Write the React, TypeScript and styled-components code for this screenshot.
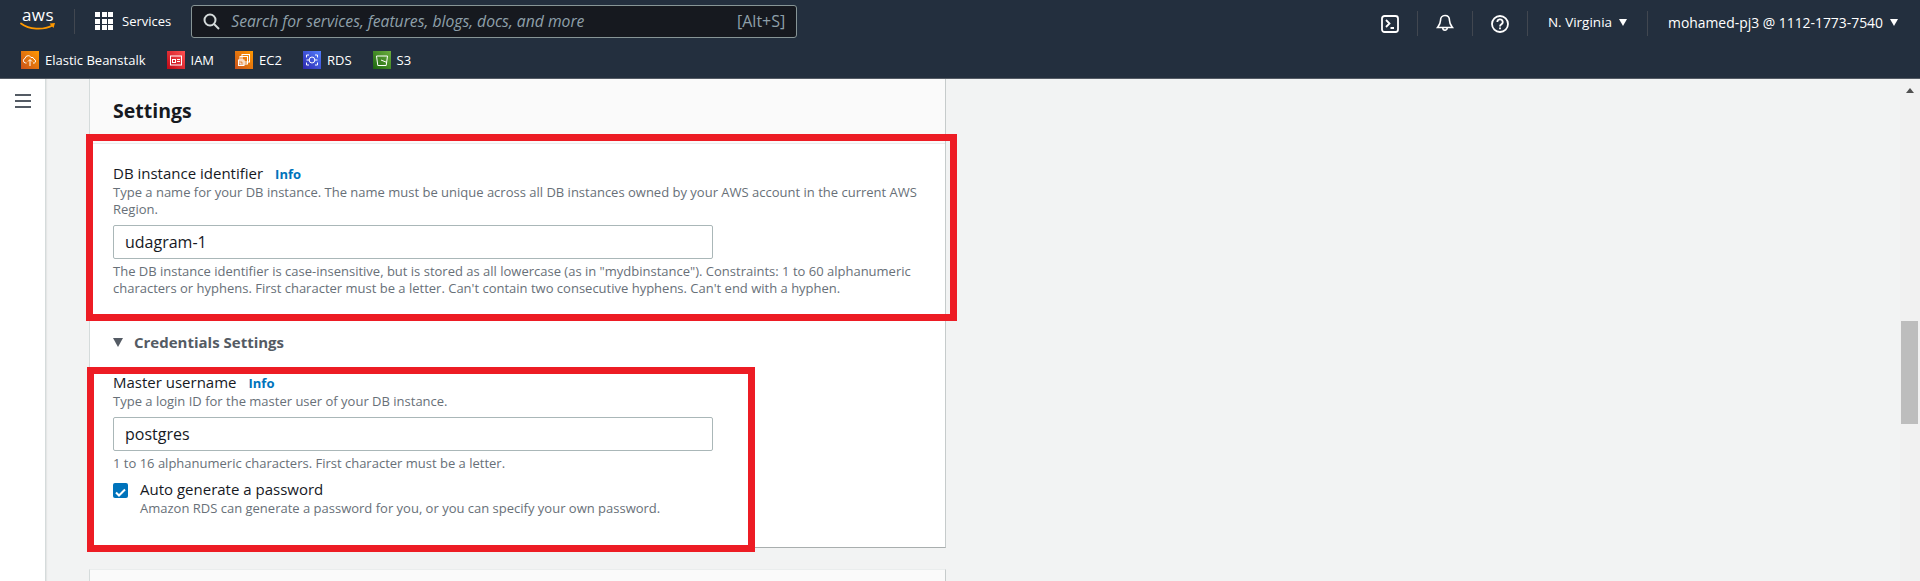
import styled, {createGlobalStyle} from 'styled-components';

const FONT = `"Open Sans", "Noto Sans", sans-serif`;

const favorites = [
    {name: 'Elastic Beanstalk', from: '#c8511b', to: '#ff9900', icon: 'cloud'},
    {name: 'IAM', from: '#bd0816', to: '#ff5252', icon: 'card'},
    {name: 'EC2', from: '#c8511b', to: '#ff9900', icon: 'chip'},
    {name: 'RDS', from: '#2e27ad', to: '#527fff', icon: 'db'},
    {name: 'S3', from: '#1b660f', to: '#6cae3e', icon: 'bucket'},
];

function FavIcon({from, to, icon}: {from: string; to: string; icon: string}) {
    return (
        <FavBadge $from={from} $to={to}>
            <svg width="18" height="18" viewBox="0 0 18 18" fill="none" stroke="#fff" strokeWidth="1">
                {icon === 'cloud' && (
                    <>
                        <path d="M5.5 12H4.6a2.4 2.4 0 0 1-.4-4.7 3 3 0 0 1 3-2.6c1.3 0 2.300.7 2.800 1.800a2.300 2.300 0 0 1 3 1.700 2 2 0 0 1 .3 3.800h-1.300"/>
                        <path d="M9 15V9M7 10.500 9 8.500l2 2"/>
                    </>
                )}
                {icon === 'card' && (
                    <>
                        <rect x="3.500" y="5" width="11" height="9"/>
                        <rect x="5.500" y="8.500" width="3" height="3"/>
                        <path d="M10 8.500h3M10 10.500h3"/>
                    </>
                )}
                {icon === 'chip' && (
                    <>
                        <rect x="7" y="3.500" width="7.500" height="7.500"/>
                        <rect x="5" y="5.500" width="7.500" height="7.500"/>
                        <rect x="3.500" y="9" width="5.500" height="5.500"/>
                    </>
                )}
                {icon === 'db' && (
                    <>
                        <path d="M6 4H3.500v2.500M12 4h2.500v2.500M6 14H3.500v-2.500M12 14h2.500v-2.500"/>
                        <ellipse cx="9" cy="9" rx="2.800" ry="3"/>
                        <path d="M3.500 9H6M12 9h2.500"/>
                    </>
                )}
                {icon === 'bucket' && (
                    <>
                        <path d="M3.500 5h11l-1.300 9.500H4.800z"/>
                        <path d="M8 9l6 2.500"/>
                    </>
                )}
            </svg>
        </FavBadge>
    );
}

function App() {
    return (
        <Page>
            <GlobalStyle/>
            <Header>
                <TopRow>
                    <Logo>
                        <LogoText>aws</LogoText>
                        <svg width="36" height="9" viewBox="0 0 36 9" fill="none">
                            <path d="M1 1.500C9 7.500 23 8.500 32.500 3.500" stroke="#ff9900" strokeWidth="1.800" strokeLinecap="round"/>
                            <path d="M29.500 1.500 35 1l-1.500 5z" fill="#ff9900"/>
                        </svg>
                    </Logo>
                    <Divider/>
                    <Services>
                        <GridIcon>
                            {Array.from({length: 9}).map((_, i) => <GridDot key={i}/>)}
                        </GridIcon>
                        <span>Services</span>
                    </Services>
                    <SearchBox>
                        <svg width="17" height="17" viewBox="0 0 17 17" fill="none" stroke="#d5dbdb" strokeWidth="2">
                            <circle cx="7" cy="7" r="5.500"/>
                            <path d="M11 11l5 5"/>
                        </svg>
                        <Placeholder>Search for services, features, blogs, docs, and more</Placeholder>
                        <Shortcut>[Alt+S]</Shortcut>
                    </SearchBox>
                    <RightNav>
                        <NavIcon>
                            <svg width="18" height="18" viewBox="0 0 18 18" fill="none" stroke="#fff" strokeWidth="1.800">
                                <rect x="1" y="1" width="16" height="16" rx="2.500"/>
                                <path d="M5 5l3.500 3.500L5 12M9.500 13H13"/>
                            </svg>
                        </NavIcon>
                        <Divider/>
                        <NavIcon>
                            <svg width="18" height="19" viewBox="0 0 18 19" fill="none" stroke="#fff" strokeWidth="1.600">
                                <path d="M9 1.500c-3 0-4.500 2.300-4.500 5 0 3-1.300 4.500-3 7h15c-1.700-2.500-3-4-3-7 0-2.700-1.500-5-4.500-5z"/>
                                <path d="M6.800 14a2.200 2.200 0 0 0 4.400 0"/>
                            </svg>
                        </NavIcon>
                        <Divider/>
                        <NavIcon>
                            <svg width="18" height="18" viewBox="0 0 18 18" fill="none" stroke="#fff" strokeWidth="1.800">
                                <circle cx="9" cy="9" r="8"/>
                                <path d="M6.300 7a2.700 2.700 0 1 1 4 2.400c-.9.500-1.300 1-1.300 2"/>
                                <path d="M9 12.500v1.800"/>
                            </svg>
                        </NavIcon>
                        <Divider/>
                        <NavMenu $size={13.5}>N. Virginia<Caret/></NavMenu>
                        <Divider/>
                        <NavMenu $size={13.9} $last>mohamed-pj3 @ 1112-1773-7540<Caret/></NavMenu>
                    </RightNav>
                </TopRow>
                <FavoritesRow>
                    {favorites.map(f => (
                        <Favorite key={f.name}>
                            <FavIcon from={f.from} to={f.to} icon={f.icon}/>
                            {f.name}
                        </Favorite>
                    ))}
                </FavoritesRow>
            </Header>
            <Body>
                <Sidebar>
                    <Hamburger>
                        <HamburgerLine/>
                        <HamburgerLine/>
                        <HamburgerLine/>
                    </Hamburger>
                </Sidebar>
                <Content>
                    <Card>
                        <CardHeader>Settings</CardHeader>
                        <IdentifierSection>
                            <Highlight $top={-10} $right={-12} $bottom={-2} $left={-4}/>
                            <Label>DB instance identifier<InfoLink>Info</InfoLink></Label>
                            <Description>
                                Type a name for your DB instance. The name must be unique across all DB instances
                                owned by your AWS account in the current AWS Region.
                            </Description>
                            <TextField>udagram-1</TextField>
                            <Hint>
                                The DB instance identifier is case-insensitive, but is stored as all lowercase (as in
                                "mydbinstance"). Constraints: 1 to 60 alphanumeric characters or hyphens. First
                                character must be a letter. Can't contain two consecutive hyphens. Can't end with a
                                hyphen.
                            </Hint>
                        </IdentifierSection>
                        <CredentialsHeading><Triangle/>Credentials Settings</CredentialsHeading>
                        <CredentialsSection>
                            <Highlight $top={-5} $right={-25} $bottom={-5} $left={-3}/>
                            <Label>Master username<InfoLink>Info</InfoLink></Label>
                            <Description>Type a login ID for the master user of your DB instance.</Description>
                            <TextField>postgres</TextField>
                            <Hint>1 to 16 alphanumeric characters. First character must be a letter.</Hint>
                            <CheckRow>
                                <CheckBox>
                                    <svg width="15" height="15" viewBox="0 0 15 15" fill="none" stroke="#fff" strokeWidth="2">
                                        <path d="M3 7.500l3 3 6-6"/>
                                    </svg>
                                </CheckBox>
                                <div>
                                    <CheckLabel>Auto generate a password</CheckLabel>
                                    <CheckHint>
                                        Amazon RDS can generate a password for you, or you can specify your own password.
                                    </CheckHint>
                                </div>
                            </CheckRow>
                        </CredentialsSection>
                    </Card>
                    <NextCard/>
                </Content>
                <Scrollbar>
                    <ScrollArrow/>
                    <ScrollThumb/>
                </Scrollbar>
            </Body>
        </Page>
    );
}

export default App;


const GlobalStyle = createGlobalStyle`
  html, body {
    margin: 0;
    padding: 0;
    height: 100%;
    overflow: hidden;
  }

  body {
    font-family: ${FONT};
    background-color: #f2f3f3;
  }
`;

const Page = styled.div`
  display: flex;
  flex-direction: column;
  width: 100%;
  height: 100vh;
  overflow: hidden;
`;

const Header = styled.header`
  flex: none;
  height: 78px;
  background-color: #232f3e;
  border-bottom: 1px solid #545b64;
  color: #ffffff;
`;

const TopRow = styled.div`
  display: flex;
  align-items: center;
  height: 42px;
  padding-left: 20px;
  padding-right: 22px;
`;

const Logo = styled.div`
  display: flex;
  flex-direction: column;
  width: 36px;
  margin-right: 18px;
  margin-top: -3px;
`;

const LogoText = styled.span`
  font-size: 17px;
  font-weight: 400;
  line-height: 14px;
  letter-spacing: 0.5px;
  text-align: center;
`;

const Divider = styled.div`
  flex: none;
  width: 1px;
  height: 25px;
  background-color: #414750;
`;

const Services = styled.div`
  display: flex;
  align-items: center;
  gap: 9px;
  margin-left: 20px;
  font-size: 13px;
  font-weight: 500;
`;

const GridIcon = styled.div`
  display: grid;
  grid-template-columns: repeat(3, 5px);
  grid-auto-rows: 5px;
  gap: 1.5px;
`;

const GridDot = styled.span`
  background-color: #ffffff;
`;

const SearchBox = styled.div`
  display: flex;
  align-items: center;
  box-sizing: border-box;
  width: 606px;
  height: 33px;
  margin-left: 20px;
  padding: 0 11px 0 11px;
  background-color: #16191f;
  border: 1px solid #879596;
  border-radius: 3px;
`;

const Placeholder = styled.span`
  flex: 1;
  margin-left: 11px;
  font-size: 15.7px;
  font-style: italic;
  color: #8fa0aa;
`;

const Shortcut = styled.span`
  font-size: 16px;
  color: #8fa0aa;
`;

const RightNav = styled.div`
  display: flex;
  align-items: center;
  margin-left: auto;
  margin-top: 4px;
`;

const NavIcon = styled.div`
  display: flex;
  align-items: center;
  justify-content: center;
  width: 54px;
  height: 20px;
  margin-top: 1px;
`;

const NavMenu = styled.div<{$size: number; $last?: boolean}>`
  display: flex;
  align-items: center;
  gap: 7px;
  margin-top: -2px;
  padding: 0 ${props => props.$last ? 0 : 20}px 0 20px;
  font-size: ${props => props.$size}px;
  white-space: nowrap;
`;

const Caret = styled.span`
  width: 0;
  height: 0;
  border-left: 4.5px solid transparent;
  border-right: 4.5px solid transparent;
  border-top: 7px solid #ffffff;
`;

const FavoritesRow = styled.div`
  display: flex;
  align-items: center;
  gap: 21px;
  height: 36px;
  padding-left: 21px;
`;

const Favorite = styled.div`
  display: flex;
  align-items: center;
  gap: 6px;
  font-size: 13px;
  font-weight: 500;
`;

const FavBadge = styled.span<{$from: string; $to: string}>`
  display: flex;
  width: 18px;
  height: 18px;
  background: linear-gradient(to top right, ${props => props.$from}, ${props => props.$to});
`;

const Body = styled.div`
  display: flex;
  flex: 1;
  min-height: 0;
`;

const Sidebar = styled.div`
  flex: none;
  width: 45px;
  background-color: #ffffff;
  border-right: 1px solid #d5dbdb;
  box-shadow: 1px 0 1px rgba(0, 0, 0, 0.05);
`;

const Hamburger = styled.div`
  display: flex;
  flex-direction: column;
  gap: 4px;
  width: 16px;
  margin: 15px 0 0 15px;
`;

const HamburgerLine = styled.span`
  height: 2px;
  background-color: #545b64;
`;

const Content = styled.main`
  flex: none;
  width: 857px;
  margin-left: 43px;
`;

const Card = styled.section`
  background-color: #ffffff;
  border-right: 1px solid #c6cbcb;
  border-left: 1px solid #d5dbdb;
  border-bottom: 1px solid #a9aeae;
`;

const CardHeader = styled.h2`
  height: 65px;
  margin: 0;
  padding: 20px 0 0 23px;
  box-sizing: border-box;
  background-color: #fafafa;
  border-bottom: 1px solid #eaeded;
  font-size: 19.5px;
  font-weight: 700;
  line-height: 24px;
  color: #16191f;
`;

const Section = styled.div`
  position: relative;
  padding-left: 23px;
`;

const IdentifierSection = styled(Section)`
  padding-top: 19px;
  padding-right: 20px;
  padding-bottom: 22px;
`;

const CredentialsSection = styled(Section)`
  width: 640px;
  box-sizing: border-box;
  margin-top: 20px;
  padding-bottom: 30px;
`;

const Highlight = styled.div<{$top: number; $right: number; $bottom: number; $left: number}>`
  position: absolute;
  top: ${props => props.$top}px;
  right: ${props => props.$right}px;
  bottom: ${props => props.$bottom}px;
  left: ${props => props.$left}px;
  border: 7px solid #ed1c24;
  pointer-events: none;
`;

const Label = styled.div`
  display: flex;
  align-items: baseline;
  height: 21px;
  font-size: 15px;
  line-height: 21px;
  color: #16191f;
`;

const InfoLink = styled.span`
  margin-left: 12px;
  font-size: 13px;
  font-weight: 700;
  color: #0073bb;
`;

const Description = styled.div`
  font-size: 13px;
  line-height: 17px;
  color: #687078;
`;

const TextField = styled.div`
  box-sizing: border-box;
  width: 600px;
  height: 34px;
  margin-top: 7px;
  padding: 0 11px;
  background-color: #ffffff;
  border: 1px solid #aab7b8;
  border-radius: 2px;
  font-size: 16px;
  line-height: 32px;
  color: #16191f;
`;

const Hint = styled.div`
  margin-top: 4px;
  font-size: 13px;
  line-height: 17px;
  color: #687078;
`;

const CredentialsHeading = styled.div`
  display: flex;
  align-items: center;
  gap: 11px;
  margin-top: 13px;
  padding-left: 23px;
  font-size: 15px;
  font-weight: 700;
  line-height: 20px;
  color: #545b64;
`;

const Triangle = styled.span`
  width: 0;
  height: 0;
  border-left: 5.5px solid transparent;
  border-right: 5.5px solid transparent;
  border-top: 9px solid #545b64;
`;

const CheckRow = styled.div`
  display: flex;
  gap: 12px;
  margin-top: 8px;
`;

const CheckBox = styled.span`
  flex: none;
  width: 15px;
  height: 15px;
  margin-top: 3px;
  background-color: #0073bb;
  border-radius: 2px;
`;

const CheckLabel = styled.div`
  font-size: 15px;
  line-height: 19px;
  color: #16191f;
`;

const CheckHint = styled.div`
  margin-top: 1px;
  font-size: 13px;
  line-height: 17px;
  color: #687078;
`;

const NextCard = styled.div`
  height: 60px;
  margin-top: 21px;
  background-color: #fafafa;
  border-top: 1px solid #eaeded;
  border-left: 1px solid #d5dbdb;
  border-right: 1px solid #c6cbcb;
`;

const Scrollbar = styled.div`
  position: relative;
  flex: none;
  width: 20px;
  margin-left: auto;
  background-color: #f1f1f1;
`;

const ScrollArrow = styled.span`
  display: block;
  width: 0;
  height: 0;
  margin: 9px auto 0;
  border-left: 4.5px solid transparent;
  border-right: 4.5px solid transparent;
  border-bottom: 5px solid #505050;
`;

const ScrollThumb = styled.div`
  position: absolute;
  top: 242px;
  left: 1px;
  width: 17px;
  height: 103px;
  background-color: #bdbdbd;
`;
